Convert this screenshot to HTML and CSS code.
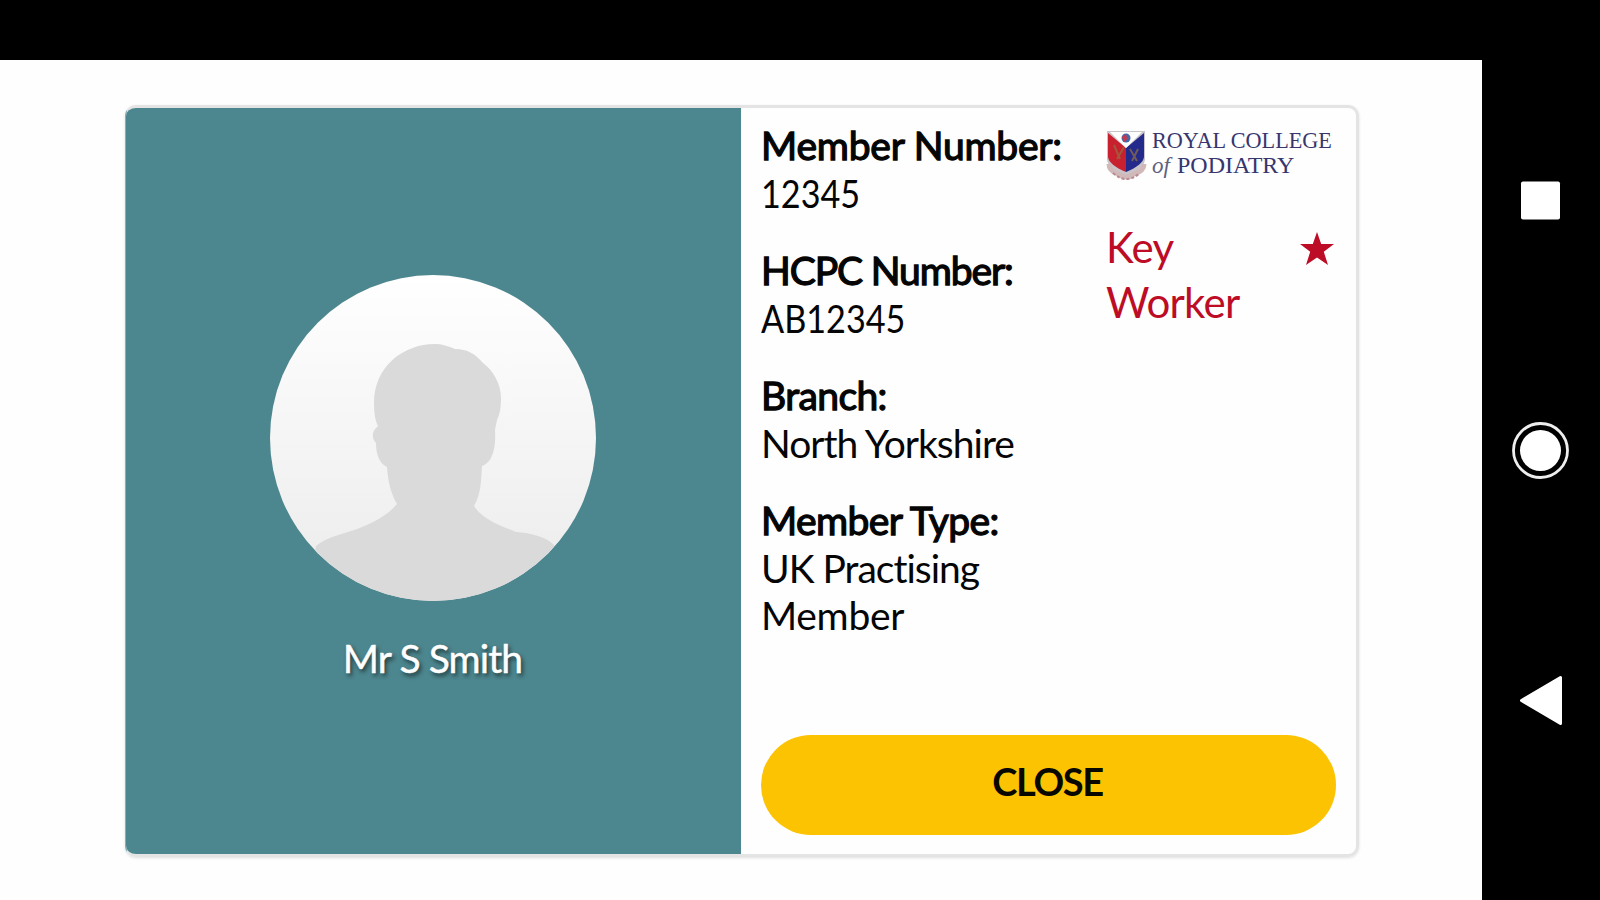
FILE: index.html
```html
<!DOCTYPE html>
<html lang="en">
<head>
<meta charset="utf-8">
<title>Membership card</title>
<link rel="stylesheet" href="styles.css">
</head>
<body>
<div class="status-bar"></div>
<div class="device">
  <main class="screen">
    <section class="card">
      <div class="profile">
        <svg class="avatar" viewBox="0 0 326 326">
          <defs>
            <linearGradient id="bg" x1="0" y1="0" x2="0" y2="1"><stop offset="0" stop-color="#fff"/><stop offset="1" stop-color="#ebebeb"/></linearGradient>
            <clipPath id="round"><circle cx="163" cy="163" r="163"/></clipPath>
          </defs>
          <g clip-path="url(#round)">
            <rect width="326" height="326" fill="url(#bg)"/>
            <path fill="#dadada" d="M46 271C56 263 68 260 81 256C100 250 117 241 127 229C121 219 118 207 117 192C110 189 106 180 106 168C102 164 102 158 105 154L108 151C105 145 104 137 104 128C104 92 133 69 165 69C172 69 178 71 185 74C198 74 205 79 213 88C223 95 231 109 231 123C231 132 230 139 227 145L225 155C226 169 224 187 212 191C211 206 211 219 204 231C212 244 229 250 246 257C261 258 277 262 284 270L290 326H36Z"/>
          </g>
        </svg>
        <div class="name">Mr S Smith</div>
      </div>
      <div class="info">
        <div class="details">
          <dl class="fields">
            <div class="field"><dt class="wide">Member Number:</dt><dd class="digits">12345</dd></div>
            <div class="field"><dt class="caps">HCPC Number:</dt><dd class="digits">AB12345</dd></div>
            <div class="field"><dt class="short">Branch:</dt><dd class="tight">North Yorkshire</dd></div>
            <div class="field"><dt class="short">Member Type:</dt><dd class="tight">UK Practising<br><span class="loose">Member</span></dd></div>
          </dl>
          <div class="badges">
            <svg class="logo" viewBox="0 0 228 54">
              <path fill="#c9c4ca" d="M1 1H39V29Q39 38 20 48Q1 38 1 29Z"/>
              <path fill="#c8202e" d="M2 3L20 18V42Q3 35 2 27Z"/>
              <path fill="#24298c" d="M38 3L20 18V42Q37 35 38 27Z"/>
              <path fill="#fff" d="M4 2H36L20 18Z"/>
              <circle cx="20" cy="8" r="4.5" fill="#4867a9"/><path fill="#cf3547" d="M16 7L20 4L21 9L18 12Z"/>
              <path stroke="#92713f" stroke-width="2" fill="none" opacity=".7" d="M8 15L14 29M11 29L18 17M24 19L31 31M32 19L26 31"/>
              <path fill="none" stroke="#d2b9b9" stroke-width="5" d="M3 34Q3 41 12 44Q20 50 28 44Q38 41 38 34"/>
              <path fill="none" stroke="#b88c91" stroke-width="2" stroke-dasharray="3 2" d="M7 43Q20 55 34 43"/>
              <text class="logo-text" transform="translate(46 17.500) scale(.926 1)" font-size="24">ROYAL COLLEGE</text>
              <text class="logo-of" transform="translate(46 43) scale(1)" font-size="23">of</text>
              <text class="logo-text" transform="translate(71 43) scale(1)" font-size="24">PODIATRY</text>
            </svg>
            <div class="key">
              <span>Key<br>Worker</span>
              <svg class="star" viewBox="0 0 34 33"><path fill="#bd0c25" d="M17 0L21.2 12H34L23.8 19.8L28 33L17 25.4L6 33L10.2 19.8L0 12H12.8Z"/></svg>
            </div>
          </div>
        </div>
        <button class="close">CLOSE</button>
      </div>
    </section>
  </main>
  <nav class="nav">
    <svg class="nav-icon" viewBox="0 0 60 60"><rect x="11" y="11.500" width="39" height="38" rx="2" fill="#fff"/></svg>
    <svg class="nav-icon" viewBox="0 0 60 60"><circle cx="30.500" cy="30.500" r="27" fill="none" stroke="#eee" stroke-width="2.800"/><circle cx="30.500" cy="30.500" r="20.500" fill="#fff"/></svg>
    <svg class="nav-icon" viewBox="0 0 60 60"><path fill="#fff" stroke="#fff" stroke-width="3" stroke-linejoin="round" d="M11.500 30.500L50.500 7.500V53.500Z"/></svg>
  </nav>
</div>
</body>
</html>
```
FILE: styles.css
```css
* { box-sizing: border-box; }
body { margin: 0; width: 1600px; height: 900px; overflow: hidden; background: #000; font-family: Lato, "Open Sans", sans-serif; color: #050505; font-variant-ligatures: none; }
.status-bar { height: 60px; background: #000; }
.device { display: flex; height: 840px; }
.screen { width: 1482px; background: #fefefe; padding: 45px 0 0 125px; }
.card { display: flex; width: 1234px; height: 752px; border: 3px solid #e4e4e5; border-left: 1px solid #89aeb4; border-radius: 11px; overflow: hidden; box-shadow: 0 1px 3px rgba(0,0,0,.12); }
.profile { width: 615px; margin: 0 0 -1px; background: #4c868e; display: flex; flex-direction: column; align-items: center; padding-top: 167px; }
.avatar { width: 326px; height: 326px; margin-right: 1px; }
.name { margin: 34px 2px 0 0; font-size: 39px; line-height: 47px; color: #fff; text-shadow: 2px 3px 4px rgba(0,0,0,.6); letter-spacing: -.9px; white-space: nowrap; -webkit-text-stroke: .4px #fff; }
.info { flex: 1; padding: 14px 20px 19px; display: flex; flex-direction: column; justify-content: space-between; }
.details { display: flex; justify-content: space-between; }
.fields { margin: 0; width: 330px; display: flex; flex-direction: column; gap: 30px; font-size: 39px; line-height: 47.5px; white-space: nowrap; }
dt { -webkit-text-stroke: 1.3px #050505; font-weight: 400; }
dd { margin: 0; }
.wide { letter-spacing: -.2px; }
.caps { letter-spacing: -1.1px; }
.short { letter-spacing: -.6px; }
.digits { transform: scaleX(.877); transform-origin: left; }
.tight { letter-spacing: -1px; }
.loose { letter-spacing: -.3px; }
.badges { width: 228px; padding-top: 8px; margin-right: 2px; }
.logo { display: block; width: 228px; height: 54px; overflow: visible; }
.logo-text { font-family: "Liberation Serif", serif; fill: #37366f; }
.logo-of { font-family: "Liberation Serif", serif; font-style: italic; fill: #62617f; }
.key { display: flex; justify-content: space-between; margin-top: 36px; font-size: 42px; line-height: 54.5px; letter-spacing: -.7px; color: #bd0c25; }
.star { width: 34px; height: 33px; margin: 12px 0 0; }
.close { height: 100px; border: 0; border-radius: 50px; background: #fcc302; color: #080800; font: 700 38px/44px Lato, sans-serif; letter-spacing: -1.4px; padding: 0 2px 8px 0; }
.nav { width: 118px; display: flex; flex-direction: column; align-items: center; padding: 110px 2px 0 0; gap: 190px; }
.nav-icon { width: 60px; height: 60px; flex: none; }
```
